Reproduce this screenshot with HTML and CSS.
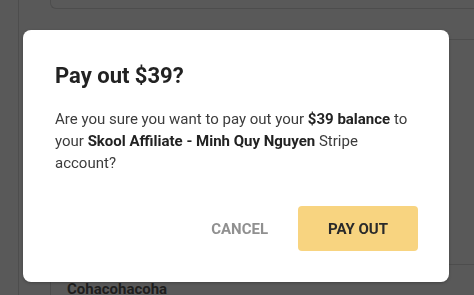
FILE: index.html
```html
<!DOCTYPE html>
<html>
    <head>
        <title>Pay out</title>
        <meta http-equiv="Content-Type" content="text/html; charset=UTF-8">
        <link rel="stylesheet" href="styles.css">
    </head>
    <body>
        <div class="page">
            <div class="sidebar"></div>
            <div class="main">
                <div class="card top-card"></div>
                <div class="card list-card">
                    <div class="row first-row"></div>
                    <div class="row name-row">Cohacohacoha</div>
                </div>
            </div>
        </div>

        <!-- modal -->
        <div class="overlay">
            <div class="dialog">
                <h2 class="dialog-title">Pay out $39?</h2>
                <p class="dialog-text">Are you sure you want to pay out your <b>$39 balance</b> to your <b>Skool Affiliate - Minh Quy Nguyen</b> Stripe account?</p>
                <div class="dialog-actions">
                    <button class="btn btn-cancel">CANCEL</button>
                    <button class="btn btn-primary">PAY OUT</button>
                </div>
            </div>
        </div>
    </body>
</html>
```

FILE: styles.css
```css
html, body {
    padding: 0;
    margin: 0;
    height: 100%;
    overflow: hidden;
}

body {
    font-family: Roboto, "Liberation Sans", Arial, sans-serif;
    background-color: #595959;
}

.page {
    display: flex;
    height: 100%;
}

.sidebar {
    width: 18px;
    flex: none;
    border-right: 1px solid #4d4d4d;
}

.main {
    flex: 1;
    padding-left: 31px;
}

.card {
    border: 1px solid #4d4d4d;
    border-right: none;
}

.top-card {
    height: 20px;
    margin-top: -12px;
    border-top: none;
    border-radius: 0 0 0 6px;
}

.list-card {
    margin-top: 30px;
    border-radius: 6px 0 0 0;
}

.row {
    border-bottom: 1px solid #4d4d4d;
}

.first-row {
    height: 224px;
}

.name-row {
    padding: 15px 0 0 16px;
    font-size: 15px;
    font-weight: bold;
    color: #1d1d1d;
    border-bottom: none;
}

/* modal over the page */
.overlay {
    position: fixed;
    top: 0;
    left: 0;
    right: 0;
    bottom: 0;
}

.dialog {
    position: absolute;
    top: 30px;
    left: 23px;
    width: 426px;
    height: 252px;
    box-sizing: border-box;
    padding: 32px 31px 31px 32px;
    background-color: #fff;
    border-radius: 8px;
    box-shadow: 0 1px 3px rgba(0, 0, 0, 0.25);
}

.dialog-title {
    margin: 0;
    font-size: 22px;
    line-height: 28px;
    font-weight: bold;
    color: #222;
}

.dialog-text {
    margin: 18px 0 0 0;
    font-size: 15px;
    line-height: 22px;
    color: #3c3c3c;
}

.dialog-text b {
    color: #222;
}

.dialog-actions {
    display: flex;
    justify-content: flex-end;
    gap: 16px;
    margin-top: 32px;
}

.btn {
    height: 45px;
    border: none;
    border-radius: 4px;
    font-family: inherit;
    font-size: 15px;
    font-weight: bold;
    background: none;
    cursor: pointer;
}

.btn-cancel {
    padding: 0 14px;
    color: #909090;
}

.btn-primary {
    width: 120px;
    background-color: #f8d480;
    color: #2a2a2a;
}
```
